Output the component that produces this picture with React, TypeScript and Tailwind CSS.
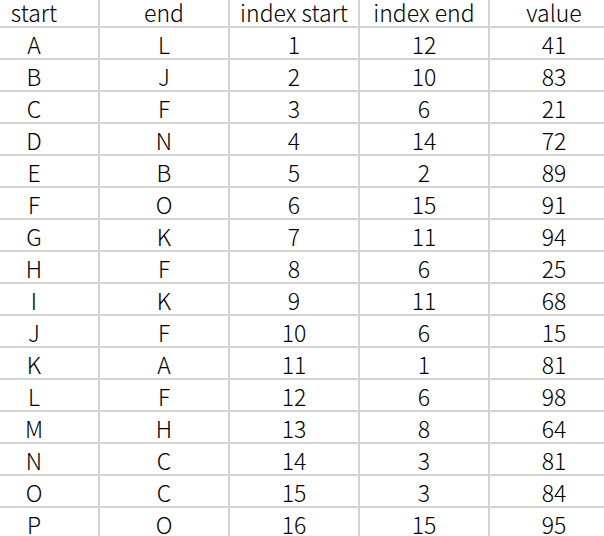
import React from "react";

const headers = ["start", "end", "index start", "index end", "value"];
const rows: (string | number)[][] = [
  ["A", "L", 1, 12, 41],
  ["B", "J", 2, 10, 83],
  ["C", "F", 3, 6, 21],
  ["D", "N", 4, 14, 72],
  ["E", "B", 5, 2, 89],
  ["F", "O", 6, 15, 91],
  ["G", "K", 7, 11, 94],
  ["H", "F", 8, 6, 25],
  ["I", "K", 9, 11, 68],
  ["J", "F", 10, 6, 15],
  ["K", "A", 11, 1, 81],
  ["L", "F", 12, 6, 98],
  ["M", "H", 13, 8, 64],
  ["N", "C", 14, 3, 81],
  ["O", "C", 15, 3, 84],
  ["P", "O", 16, 15, 95],
];

export default function App() {
  const all = [headers, ...rows];
  return (
    <div className="w-[604px] h-[536px] overflow-hidden bg-white">
      <div
        className="ml-[-30px] mt-[-4px] grid grid-cols-[130px_130px_130px_130px_130px] text-[23px] font-light text-black"
        style={{ fontFamily: '"Noto Sans CJK SC", "Noto Sans", sans-serif' }}
      >
        {all.map((r, i) =>
          r.map((c, j) => (
            <div
              key={`${i}-${j}`}
              className="h-[32px] border-r-2 border-b-2 border-[#d4d4d4] flex items-center justify-center leading-none pt-[2px]"
            >
              {c}
            </div>
          ))
        )}
      </div>
    </div>
  );
}
